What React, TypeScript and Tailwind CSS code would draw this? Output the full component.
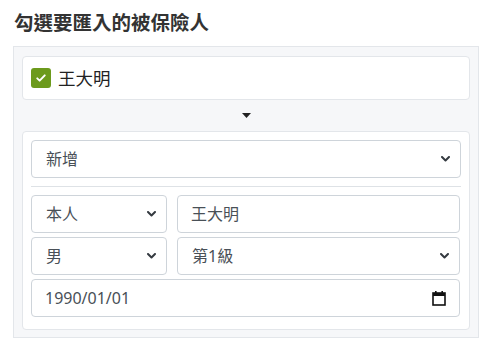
import type { ReactNode } from "react"

const FONT = "font-['Noto_Sans','Noto_Sans_CJK_TC',sans-serif]"

function Chevron() {
  return (
    <svg
      className="pointer-events-none absolute right-[10px] top-1/2 -translate-y-1/2"
      width="9"
      height="6"
      viewBox="0 0 9 6"
    >
      <path d="M1 1l3.5 3.5L8 1" fill="none" stroke="#343a40" strokeWidth="2" strokeLinecap="round" strokeLinejoin="round" />
    </svg>
  )
}

function SelectBox({ value, className }: { value: string; className?: string }) {
  return (
    <div className={`relative h-[38px] rounded border border-[#ced4da] bg-white ${className ?? ""}`}>
      <div className="flex h-full items-center pl-[14px] text-base text-[#495057]">{value}</div>
      <Chevron />
    </div>
  )
}

function TextBox({ children, className }: { children: ReactNode; className?: string }) {
  return (
    <div className={`flex h-[38px] items-center rounded border border-[#ced4da] bg-white pl-[13px] pr-[13px] text-base text-[#495057] ${className ?? ""}`}>
      {children}
    </div>
  )
}

export default function App() {
  return (
    <div className={`h-[348px] w-[492px] bg-white ${FONT}`}>
      <h5 className="pl-[14px] pt-[9px] text-[19.5px] font-bold leading-7 text-[#333]">勾選要匯入的被保險人</h5>

      <div className="ml-[13px] mt-[9px] h-[292px] w-[466px] border border-[#e3e6ea] bg-[#f6f7f9] px-2 pt-[9px]">
        <div className="flex h-[44px] items-center gap-[7px] rounded border border-[#e3e6ea] bg-white px-2">
          <span className="flex h-5 w-5 items-center justify-center rounded-[3px] bg-[#6c9a1c]">
            <svg width="12" height="12" viewBox="0 0 16 16">
              <path d="M3 8.5l3.2 3L13 4.5" fill="none" stroke="white" strokeWidth="2.6" strokeLinecap="round" strokeLinejoin="round" />
            </svg>
          </span>
          <span className="text-[17.5px] text-[#222]">王大明</span>
        </div>

        <div className="flex h-[31px] items-center justify-center">
          <svg width="9" height="5" viewBox="0 0 9 5">
            <path d="M0 0h9L4.5 5z" fill="#222" />
          </svg>
        </div>

        <div className="h-[199px] rounded border border-[#e3e6ea] bg-white px-2 pt-2">
          <SelectBox value="新增" />
          <hr className="my-2 border-[#dee2e6]" />
          <div className="flex flex-col gap-1">
            <div className="flex gap-[10px]">
              <SelectBox value="本人" className="w-[136px]" />
              <TextBox className="mr-[1px] flex-1">王大明</TextBox>
            </div>
            <div className="flex gap-[10px]">
              <SelectBox value="男" className="w-[136px]" />
              <SelectBox value="第1級" className="mr-[1px] flex-1" />
            </div>
            <TextBox className="mr-[1px] justify-between">
              <span>1990/01/01</span>
              <svg width="14" height="16" viewBox="0 0 14 16">
                <rect x="1" y="3" width="12" height="12" fill="none" stroke="#111" strokeWidth="1.6" />
                <rect x="1" y="3" width="12" height="3" fill="#111" />
                <rect x="3" y="1" width="1.6" height="3" fill="#111" />
                <rect x="9.4" y="1" width="1.6" height="3" fill="#111" />
              </svg>
            </TextBox>
          </div>
        </div>
      </div>
    </div>
  )
}
